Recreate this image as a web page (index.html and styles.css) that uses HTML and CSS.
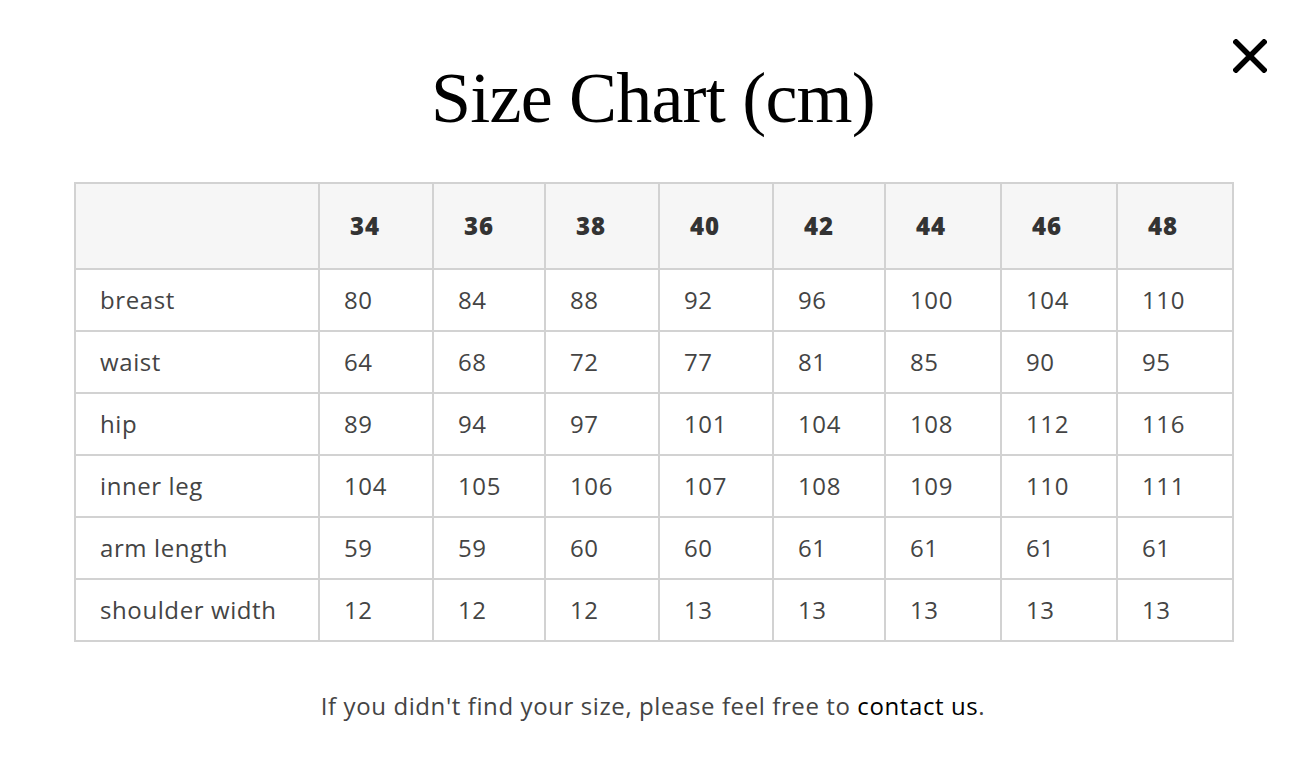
FILE: index.html
```html
<!DOCTYPE html>
<html lang="en">
<head>
<meta charset="utf-8">
<title>Size Chart</title>
<link rel="stylesheet" href="styles.css">
</head>
<body>
<div class="modal">
  <button class="close" aria-label="Close">
    <svg width="34" height="34" viewBox="0 0 34 34"><path d="M3 3 L31 31 M31 3 L3 31" stroke="#000" stroke-width="5.5" stroke-linecap="square"/></svg>
  </button>
  <h1 class="title">Size Chart (cm)</h1>
  <table class="chart">
    <colgroup>
      <col class="c-label"><col class="c-114"><col class="c-112"><col class="c-114"><col class="c-114"><col class="c-112"><col class="c-116"><col class="c-116"><col class="c-116">
    </colgroup>
    <thead>
      <tr><th></th><th>34</th><th>36</th><th>38</th><th>40</th><th>42</th><th>44</th><th>46</th><th>48</th></tr>
    </thead>
    <tbody>
      <tr><td>breast</td><td>80</td><td>84</td><td>88</td><td>92</td><td>96</td><td>100</td><td>104</td><td>110</td></tr>
      <tr><td>waist</td><td>64</td><td>68</td><td>72</td><td>77</td><td>81</td><td>85</td><td>90</td><td>95</td></tr>
      <tr><td>hip</td><td>89</td><td>94</td><td>97</td><td>101</td><td>104</td><td>108</td><td>112</td><td>116</td></tr>
      <tr><td>inner leg</td><td>104</td><td>105</td><td>106</td><td>107</td><td>108</td><td>109</td><td>110</td><td>111</td></tr>
      <tr><td>arm length</td><td>59</td><td>59</td><td>60</td><td>60</td><td>61</td><td>61</td><td>61</td><td>61</td></tr>
      <tr><td>shoulder width</td><td>12</td><td>12</td><td>12</td><td>13</td><td>13</td><td>13</td><td>13</td><td>13</td></tr>
    </tbody>
  </table>
  <p class="note">If you didn't find your size, please feel free to <a href="#" class="link">contact us</a>.</p>
</div>
</body>
</html>
```

FILE: styles.css
```css
html, body {
  margin: 0;
  padding: 0;
  background: #fff;
}
body {
  font-family: "Open Sans", "Liberation Sans", sans-serif;
  color: #444;
}
.modal {
  position: relative;
  width: 1306px;
  height: 766px;
  display: flex;
  flex-direction: column;
  align-items: center;
  box-sizing: border-box;
  padding-top: 56px;
}
.close {
  position: absolute;
  top: 39px;
  left: 1233px;
  width: 34px;
  height: 34px;
  padding: 0;
  border: 0;
  background: none;
  cursor: pointer;
}
.close svg { display: block; }
.title {
  margin: 0;
  font-family: "Liberation Serif", "DejaVu Serif", serif;
  font-weight: 400;
  font-size: 72px;
  line-height: 84px;
  color: #000;
  letter-spacing: -0.8px;
}
.chart {
  align-self: flex-start;
  margin: 42px 0 0 74px;
  border-collapse: collapse;
  table-layout: fixed;
  width: 1160px;
  font-size: 24px;
  letter-spacing: 0.6px;
}
.c-label { width: 244px; }
.c-112 { width: 112px; }
.c-114 { width: 114px; }
.c-116 { width: 116px; }
.chart th, .chart td {
  border: 2px solid #d2d2d2;
  text-align: left;
  padding: 0 0 0 24px;
  color: #444;
  line-height: 30px;
}
.chart th {
  background: #f6f6f6;
  height: 84px;
  font-weight: 800;
  color: #333;
  padding-left: 30px;
  letter-spacing: 1px;
}
.chart td {
  height: 60px;
}
.note {
  margin: 47px 0 0;
  font-size: 24px;
  letter-spacing: 0.6px;
  color: #444;
}
.link {
  color: #000;
  text-decoration: none;
}
```
